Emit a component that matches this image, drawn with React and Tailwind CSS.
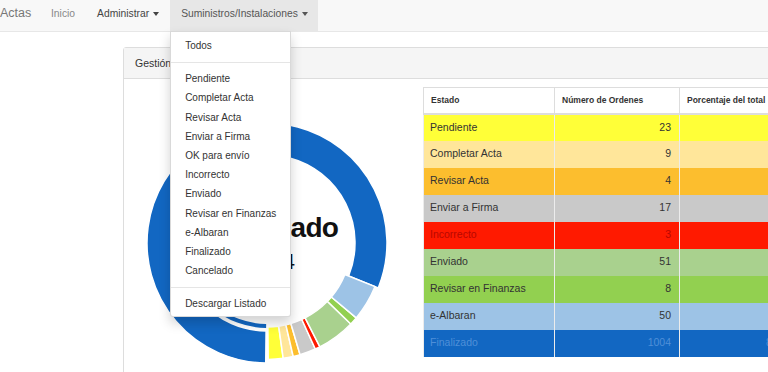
import React from "react";

const rows = [
  { estado: "Pendiente", n: 23, bg: "bg-[#ffff38]", text: "text-[#333]" },
  { estado: "Completar Acta", n: 9, bg: "bg-[#ffe69a]", text: "text-[#333]" },
  { estado: "Revisar Acta", n: 4, bg: "bg-[#fcbe2e]", text: "text-[#333]" },
  { estado: "Enviar a Firma", n: 17, bg: "bg-[#c9c9c9]", text: "text-[#333]" },
  { estado: "Incorrecto", n: 3, bg: "bg-[#ff1a00]", text: "text-[#b80800]" },
  { estado: "Enviado", n: 51, bg: "bg-[#a9d18e]", text: "text-[#333]" },
  { estado: "Revisar en Finanzas", n: 8, bg: "bg-[#92d050]", text: "text-[#333]" },
  { estado: "e-Albaran", n: 50, bg: "bg-[#9dc3e6]", text: "text-[#333]" },
  { estado: "Finalizado", n: 1004, bg: "bg-[#1267c2]", text: "text-[#4f8fd8]" },
];

const total = rows.reduce((s, r) => s + r.n, 0);

const menu = [
  "Pendiente",
  "Completar Acta",
  "Revisar Acta",
  "Enviar a Firma",
  "OK para envío",
  "Incorrecto",
  "Enviado",
  "Revisar en Finanzas",
  "e-Albaran",
  "Finalizado",
  "Cancelado",
];

// angles in degrees, measured from 6 o'clock going towards 3 o'clock
const slices = [
  { c: "#ffff38", a0: 0.6, a1: 8 },
  { c: "#ffe69a", a0: 8, a1: 13 },
  { c: "#fcbe2e", a0: 13, a1: 16.5 },
  { c: "#c9c9c9", a0: 16.5, a1: 24.5 },
  { c: "#ff1a00", a0: 24.5, a1: 27 },
  { c: "#a9d18e", a0: 27, a1: 46 },
  { c: "#92d050", a0: 46, a1: 50 },
  { c: "#9dc3e6", a0: 50, a1: 68 },
];

const cx = 125;
const cy = 125;

function pt(r, a) {
  const t = (a * Math.PI) / 180;
  return [cx + r * Math.sin(t), cy + r * Math.cos(t)];
}

function sector(a0, a1, r0, r1) {
  const large = a1 - a0 > 180 ? 1 : 0;
  const [x0, y0] = pt(r1, a0);
  const [x1, y1] = pt(r1, a1);
  const [x2, y2] = pt(r0, a1);
  const [x3, y3] = pt(r0, a0);
  return `M${x0} ${y0} A${r1} ${r1} 0 ${large} 0 ${x1} ${y1} L${x2} ${y2} A${r0} ${r0} 0 ${large} 1 ${x3} ${y3} Z`;
}

function Caret() {
  return (
    <span className="inline-block w-0 h-0 ml-[4px] align-middle border-t-[4px] border-x-[3.5px] border-x-transparent border-t-current" />
  );
}

function Donut() {
  return (
    <svg width="250" height="250" viewBox="0 0 250 250" className="shrink-0">
      <path d={sector(200, 359.4, 81, 85)} fill="#1267c2" />
      <path d={sector(68, 359.4, 88, 120)} fill="#1267c2" stroke="#fff" strokeWidth="1.5" />
      {slices.map((s, i) => (
        <path key={i} d={sector(s.a0, s.a1, 84, 116.5)} fill={s.c} stroke="#fff" strokeWidth="1.5" />
      ))}
      <text x="196" y="119" textAnchor="end" fontSize="28" letterSpacing="-0.8" fontWeight="700" fill="#111" fontFamily="Liberation Sans, Arial, sans-serif">
        Finalizado
      </text>
      <text x="153" y="151" textAnchor="end" fontSize="22" fill="#111" fontFamily="Liberation Sans, Arial, sans-serif">
        1004
      </text>
    </svg>
  );
}

export default function App() {
  return (
    <div className="w-[768px] h-[372px] overflow-hidden bg-white font-['Liberation_Sans',Arial,sans-serif] text-[#333]">
      {/* navbar */}
      <div className="flex h-[32px] bg-[#f8f8f8] border-b border-[#e7e7e7] text-[10.3px]">
        <div className="w-[40px] leading-[27px] text-[12.5px] text-[#777]">Actas</div>
        <div className="px-[11px] leading-[27px] text-[#888]">Inicio</div>
        <div className="px-[11px] leading-[27px] text-[#444]">
          Administrar
          <Caret />
        </div>
        <div className="relative w-[148px] pl-[11px] leading-[27px] bg-[#e7e7e7] text-[#555]">
          Suministros/Instalaciones
          <Caret />
          <div className="absolute left-0 top-[31px] z-10 w-[121px] bg-white border border-[rgba(0,0,0,0.15)] rounded-b-[3px] shadow-[0_6px_12px_rgba(0,0,0,0.18)] pt-[4px] pb-[2px] text-[10px] text-[#333] leading-[19.2px]">
            <div className="pl-[14px]">Todos</div>
            <div className="my-[6.5px] h-px bg-[#e5e5e5]" />
            {menu.map((m) => (
              <div key={m} className="pl-[14px]">
                {m}
              </div>
            ))}
            <div className="my-[6.5px] h-px bg-[#e5e5e5]" />
            <div className="pl-[14px]">Descargar Listado</div>
          </div>
        </div>
      </div>

      {/* panel */}
      <div className="ml-[123px] mt-[15px] w-[700px] border border-[#ddd] rounded-[3px]">
        <div className="h-[31px] bg-[#f5f5f5] border-b border-[#ddd] pl-[11px] leading-[30px] text-[10.5px]">
          Gestión de Actas
        </div>
        <div className="flex items-start h-[300px]">
          <div className="ml-[18px] mt-[39px]">
            <Donut />
          </div>
          <table className="ml-[31px] mt-[8px] w-[386px] table-fixed border-collapse text-[10.5px]">
            <thead>
              <tr className="h-[26px] text-[8.5px] font-bold text-[#333] text-left">
                <th className="w-[131px] px-[7px] border-t border-l border-b-2 border-[#ddd]">Estado</th>
                <th className="w-[125px] px-[7px] border-t border-l border-b-2 border-[#ddd]">Número de Ordenes</th>
                <th className="w-[130px] px-[7px] border-t border-l border-b-2 border-[#ddd]">Porcentaje del total</th>
              </tr>
            </thead>
            <tbody>
              {rows.map((r) => (
                <tr key={r.estado} className={`h-[27px] ${r.bg} ${r.text}`}>
                  <td className="px-[6px] border-l border-[#ececec]">{r.estado}</td>
                  <td className="pr-[8px] text-right border-l border-[#ececec]">{r.n}</td>
                  <td className="pr-[8px] text-right border-l border-[#ececec]">
                    {((r.n / total) * 100).toFixed(2)}%
                  </td>
                </tr>
              ))}
            </tbody>
          </table>
        </div>
      </div>
    </div>
  );
}
